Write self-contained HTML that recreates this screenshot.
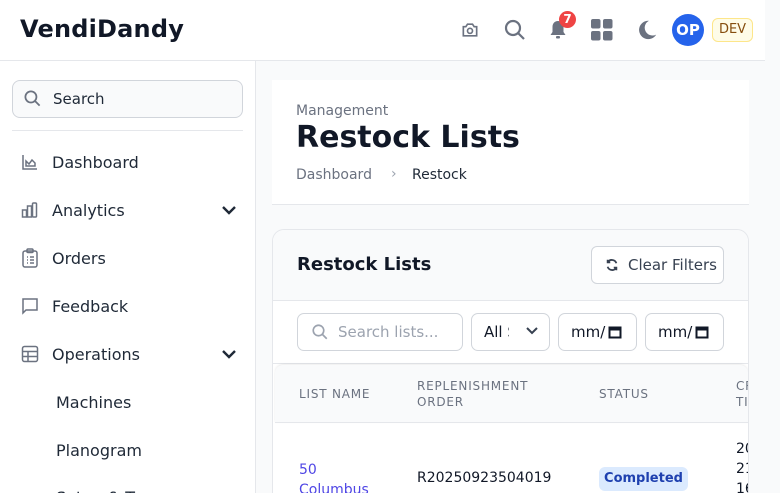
<!DOCTYPE html>
<html style="overflow:hidden;width:780px;height:493px"><head><meta charset="utf-8"><style>
*{box-sizing:border-box;margin:0;padding:0}
html,body{overflow:hidden}
body{width:780px;height:493px;background:#f9fafb;font-family:"DejaVu Sans","Liberation Sans",sans-serif;color:#111827;position:relative}
.abs{position:absolute}
.hdr{left:0;top:0;width:765px;height:61px;background:#fff;border-bottom:1px solid #e5e7eb}
.logo{left:20px;top:15px;font-size:24px;font-weight:bold;color:#111827;letter-spacing:0.2px}
.side{left:0;top:61px;width:256px;height:432px;background:#fff;border-right:1px solid #e5e7eb}
.sbox{left:12px;top:80px;width:231px;height:38px;border:1px solid #d1d5db;border-radius:8px;background:#f9fafb}
.nav{left:52px;font-size:16px;color:#1f2937}
svg{display:block}
</style></head><body>
<div class="abs hdr"></div>
<div class="abs logo">VendiDandy</div>
<svg class="abs" style="left:460px;top:20px" width="20" height="20" viewBox="0 0 24 24" fill="none" stroke="#6b7280" stroke-width="2"><path d="M4 8h3l2-3h6l2 3h3v11H4z"/><circle cx="12" cy="13" r="3"/></svg>
<svg class="abs" style="left:503px;top:18px" width="24" height="24" viewBox="0 0 24 24" fill="none" stroke="#6b7280" stroke-width="2.2"><circle cx="10" cy="10" r="7"/><path d="M15 15l6 6"/></svg>
<svg class="abs" style="left:548px;top:19px" width="20" height="22" viewBox="0 0 20 22" fill="#6b7280"><path d="M10 2c-3.5 0-5.5 2.5-5.5 6v5l-2 3h15l-2-3V8c0-3.5-2-6-5.5-6z"/><rect x="8" y="17" width="4" height="2.5" rx="1"/></svg>
<div class="abs" style="left:559px;top:11px;width:17px;height:17px;border-radius:50%;background:#ef4444;color:#fff;font-size:12px;font-weight:bold;text-align:center;line-height:17px">7</div>
<svg class="abs" style="left:591px;top:19px" width="22" height="22" viewBox="0 0 22 22" fill="#6b7280"><rect x="0" y="0" width="9.5" height="9.5" rx="2"/><rect x="12" y="0" width="9.5" height="9.5" rx="2"/><rect x="0" y="12" width="9.5" height="9.5" rx="2"/><rect x="12" y="12" width="9.5" height="9.5" rx="2"/></svg>
<svg class="abs" style="left:636px;top:19px" width="22" height="22" viewBox="0 0 24 24" fill="#6b7280"><path d="M14 2a10 10 0 1 0 8 15A8 8 0 0 1 14 2z"/></svg>
<div class="abs" style="left:672px;top:14px;width:32px;height:32px;border-radius:50%;background:#2563eb;color:#fff;font-size:15px;font-weight:bold;text-align:center;line-height:32px">OP</div>
<div class="abs" style="left:712px;top:18px;width:41px;height:24px;border-radius:6px;background:#fefce8;border:1px solid #fde68a;color:#854d0e;font-size:13px;text-align:center;line-height:22px">DEV</div>

<div class="abs side"></div>
<div class="abs sbox"></div>
<svg class="abs" style="left:23px;top:89px" width="19" height="19" viewBox="0 0 24 24" fill="none" stroke="#6b7280" stroke-width="2.2"><circle cx="10" cy="10" r="7"/><path d="M15 15l6 6"/></svg>
<div class="abs" style="left:53px;top:90px;font-size:15px;color:#1f2937">Search</div>
<div class="abs" style="left:12px;top:130px;width:231px;height:1px;background:#e5e7eb"></div>

<svg class="abs" style="left:21px;top:153px" width="18" height="18" viewBox="0 0 18 18" fill="none" stroke="#6b7280" stroke-width="1.5"><path d="M2 2v14h14"/><path d="M5 13V8l3 3 3-4 3 3v3z"/></svg>
<div class="abs nav" style="top:153px">Dashboard</div>
<svg class="abs" style="left:21px;top:201px" width="18" height="18" viewBox="0 0 18 18" fill="none" stroke="#6b7280" stroke-width="1.5"><rect x="1.5" y="9" width="4" height="7"/><rect x="6.5" y="5" width="4" height="11"/><rect x="11.5" y="2" width="4" height="14" rx="1"/></svg>
<div class="abs nav" style="top:201px">Analytics</div>
<svg class="abs" style="left:221px;top:204px" width="16" height="12" viewBox="0 0 16 12" fill="none" stroke="#1f2937" stroke-width="2.4"><path d="M2 3l6 6 6-6"/></svg>
<svg class="abs" style="left:21px;top:248px" width="18" height="20" viewBox="0 0 18 20" fill="none" stroke="#6b7280" stroke-width="1.5"><rect x="2" y="3" width="14" height="16" rx="2"/><rect x="6" y="1" width="6" height="3.5" rx="1"/><path d="M6 9h1M9 9h4M6 12h1M9 12h4M6 15h1M9 15h4"/></svg>
<div class="abs nav" style="top:249px">Orders</div>
<svg class="abs" style="left:21px;top:297px" width="18" height="18" viewBox="0 0 18 18" fill="none" stroke="#6b7280" stroke-width="1.5"><path d="M2 2h14v11H5l-3 3z"/></svg>
<div class="abs nav" style="top:297px">Feedback</div>
<svg class="abs" style="left:21px;top:345px" width="18" height="18" viewBox="0 0 18 18" fill="none" stroke="#6b7280" stroke-width="1.5"><rect x="1.5" y="1.5" width="15" height="15" rx="2"/><path d="M1.5 6.5h15M1.5 11.5h15M7 6.5v10"/></svg>
<div class="abs nav" style="top:345px">Operations</div>
<svg class="abs" style="left:221px;top:348px" width="16" height="12" viewBox="0 0 16 12" fill="none" stroke="#1f2937" stroke-width="2.4"><path d="M2 3l6 6 6-6"/></svg>
<div class="abs nav" style="left:56px;top:393px">Machines</div>
<div class="abs nav" style="left:56px;top:441px">Planogram</div>
<div class="abs nav" style="left:56px;top:488px">Setup &amp; T</div>

<div class="abs" style="left:272px;top:80px;width:477px;height:125px;background:#fff;border-bottom:1px solid #e5e7eb"></div>
<div class="abs" style="left:296px;top:103px;font-size:14px;color:#6b7280">Management</div>
<div class="abs" style="left:296px;top:120px;font-size:30px;font-weight:bold;color:#111827">Restock Lists</div>
<div class="abs" style="left:296px;top:167px;font-size:14px;color:#6b7280">Dashboard</div>
<div class="abs" style="left:391px;top:166px;font-size:14px;color:#9ca3af">›</div>
<div class="abs" style="left:412px;top:167px;font-size:14px;color:#1f2937">Restock</div>

<div class="abs" style="left:272px;top:229px;width:477px;height:264px;background:#fff;border:1px solid #e5e7eb;border-bottom:none;border-radius:12px 12px 0 0;overflow:hidden">
  <div class="abs" style="left:0;top:0;width:477px;height:71px;background:#f9fafb;border-bottom:1px solid #e5e7eb"></div>
  <div class="abs" style="left:24px;top:24px;font-size:18px;font-weight:bold;color:#111827">Restock Lists</div>
  <div class="abs" style="left:318px;top:16px;width:133px;height:38px;border:1px solid #d1d5db;border-radius:6px;background:#fff"></div>
  <svg class="abs" style="left:332px;top:28px" width="14" height="14" viewBox="0 0 16 16" fill="none" stroke="#374151" stroke-width="2"><path d="M13 6A5.5 5.5 0 0 0 3 5M3 10a5.5 5.5 0 0 0 10 1"/><path d="M3 2v3h3M13 14v-3h-3"/></svg>
  <div class="abs" style="left:355px;top:26px;font-size:15px;color:#374151">Clear Filters</div>
  <div class="abs" style="left:24px;top:83px;width:166px;height:38px;border:1px solid #d1d5db;border-radius:7px"></div>
  <svg class="abs" style="left:38px;top:93px" width="18" height="18" viewBox="0 0 24 24" fill="none" stroke="#9ca3af" stroke-width="2.2"><circle cx="10" cy="10" r="7"/><path d="M15 15l6 6"/></svg>
  <div class="abs" style="left:65px;top:93px;font-size:15px;color:#9ca3af">Search lists...</div>
  <div class="abs" style="left:198px;top:83px;width:79px;height:38px;border:1px solid #d1d5db;border-radius:7px"></div>
  <div class="abs" style="left:211px;top:93px;font-size:15px;color:#111827;width:25px;overflow:hidden;white-space:nowrap">All S</div>
  <svg class="abs" style="left:252px;top:96px" width="14" height="10" viewBox="0 0 14 10" fill="none" stroke="#374151" stroke-width="2"><path d="M2 2l5 5 5-5"/></svg>
  <div class="abs" style="left:285px;top:83px;width:79px;height:38px;border:1px solid #d1d5db;border-radius:7px"></div>
  <div class="abs" style="left:298px;top:93px;font-size:15px;color:#111827">mm/</div>
  <svg class="abs" style="left:335px;top:95px" width="14" height="14" viewBox="0 0 14 14" fill="none" stroke="#111827" stroke-width="2"><rect x="1.5" y="2.5" width="11" height="10"/><path d="M1.5 4.5h11"/></svg>
  <div class="abs" style="left:372px;top:83px;width:79px;height:38px;border:1px solid #d1d5db;border-radius:7px"></div>
  <div class="abs" style="left:385px;top:93px;font-size:15px;color:#111827">mm/</div>
  <svg class="abs" style="left:422px;top:95px" width="14" height="14" viewBox="0 0 14 14" fill="none" stroke="#111827" stroke-width="2"><rect x="1.5" y="2.5" width="11" height="10"/><path d="M1.5 4.5h11"/></svg>
  <div class="abs" style="left:0;top:133px;width:477px;height:1px;background:#e5e7eb"></div>
  <div class="abs" style="left:2px;top:135px;width:473px;height:58px;background:#f9fafb;border-bottom:1px solid #e5e7eb;border-radius:8px 8px 0 0;box-shadow:0 -1px 2px rgba(0,0,0,0.08)"></div>
  <div class="abs" style="left:26px;top:157px;font-size:12px;color:#6b7280;letter-spacing:0.8px">LIST NAME</div>
  <div class="abs" style="left:144px;top:148px;font-size:12px;color:#6b7280;letter-spacing:0.8px;line-height:16px">REPLENISHMENT<br>ORDER</div>
  <div class="abs" style="left:326px;top:157px;font-size:12px;color:#6b7280;letter-spacing:0.8px">STATUS</div>
  <div class="abs" style="left:463px;top:148px;font-size:12px;color:#6b7280;letter-spacing:0.8px;line-height:16px">CR<br>TI</div>
  <div class="abs" style="left:26px;top:230px;font-size:14px;color:#4f46e5;line-height:20px">50<br>Columbus</div>
  <div class="abs" style="left:144px;top:240px;font-size:14px;color:#111827">R20250923504019</div>
  <div class="abs" style="left:326px;top:237px;width:89px;height:24px;border-radius:6px;background:#dbeafe;color:#1e40af;font-size:13px;font-weight:bold;text-align:center;line-height:24px">Completed</div>
  <div class="abs" style="left:463px;top:209px;font-size:14px;color:#111827;line-height:20px">20<br>21<br>16</div>
</div>
</body></html>
